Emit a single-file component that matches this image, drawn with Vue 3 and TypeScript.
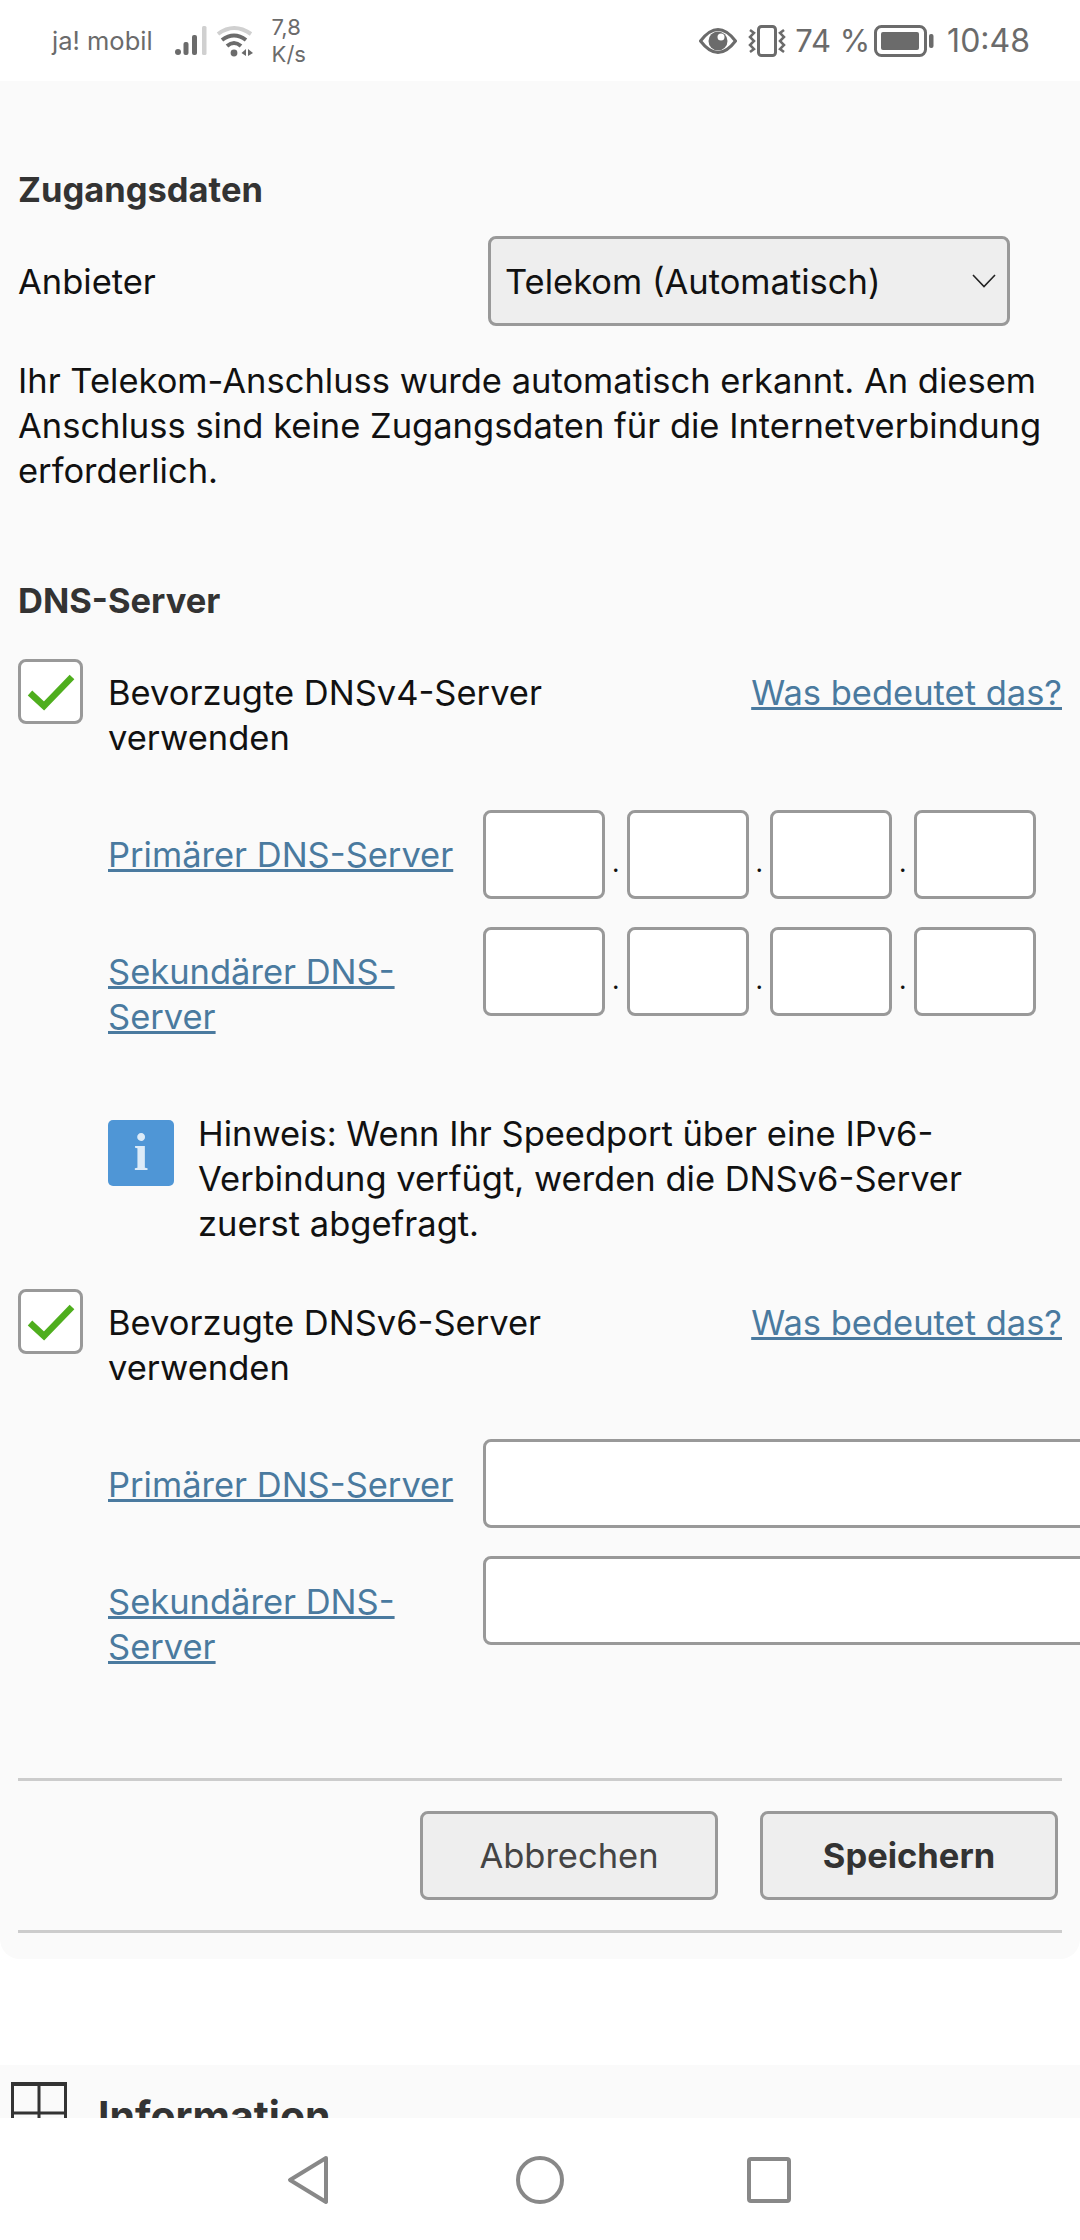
<template>
  <div class="phone">
    <!-- Statusleiste -->
    <header class="status">
      <span class="carrier">ja! mobil</span>
      <svg class="signal" width="32" height="31" viewBox="0 0 32 31">
        <circle cx="3" cy="27" r="3" fill="#6b6b6b" />
        <rect x="8.5" y="17" width="5" height="13" rx="2" fill="#6b6b6b" />
        <rect x="17" y="10" width="5" height="20" rx="2" fill="#6b6b6b" />
        <rect x="27" y="1" width="4.5" height="29" rx="1.5" fill="#d0d0d0" />
      </svg>
      <svg class="wifi" width="38" height="32" viewBox="0 0 38 32">
        <path d="M2 9 Q18 -3 35 9" fill="none" stroke="#d0d0d0" stroke-width="4" />
        <path d="M6 15 Q18 6 30 15" fill="none" stroke="#6b6b6b" stroke-width="4" />
        <path d="M11 21 Q18 15 25 21" fill="none" stroke="#6b6b6b" stroke-width="4" />
        <circle cx="18" cy="28" r="3.4" fill="#6b6b6b" />
        <path d="M30 24 L25.5 28 L30 31 Z M32 24 L37 28 L32 31 Z" fill="#6b6b6b" />
      </svg>
      <span class="speed">7,8<br />K/s</span>
      <span class="grow"></span>
      <svg class="eye" width="38" height="26" viewBox="0 0 38 26">
        <path d="M1.5 13 Q19 -10 36.500 13 Q19 36 1.500 13 Z" fill="none" stroke="#6b6b6b" stroke-width="3" />
        <circle cx="19" cy="13" r="9.500" fill="#6b6b6b" />
        <circle cx="22" cy="9" r="3.500" fill="#fff" />
      </svg>
      <svg class="vibrate" width="38" height="32" viewBox="0 0 38 32">
        <rect x="10.500" y="1.500" width="17" height="29" rx="3" fill="none" stroke="#6b6b6b" stroke-width="3" />
        <path d="M2 5 L6 8 L2 12 L6 16 L2 20 L6 24 L2 27" fill="none" stroke="#6b6b6b" stroke-width="2.500" />
        <path d="M36 5 L32 8 L36 12 L32 16 L36 20 L32 24 L36 27" fill="none" stroke="#6b6b6b" stroke-width="2.500" />
      </svg>
      <span class="pct">74 %</span>
      <svg class="battery" width="60" height="32" viewBox="0 0 60 32">
        <rect x="1.500" y="1.500" width="50" height="29" rx="6" fill="none" stroke="#6b6b6b" stroke-width="3" />
        <rect x="7" y="7" width="38" height="18" rx="2" fill="#6b6b6b" />
        <rect x="55" y="9" width="4.500" height="14" rx="2" fill="#6b6b6b" />
      </svg>
      <span class="clock">10:48</span>
    </header>

    <main class="card">
      <h2 class="heading">Zugangsdaten</h2>
      <div class="provider">
        <span class="provider-label">Anbieter</span>
        <div class="select">
          <span>Telekom (Automatisch)</span>
          <svg width="24" height="14" viewBox="0 0 24 14">
            <path d="M1 1 L12 12.500 L23 1" fill="none" stroke="#222" stroke-width="1.600" />
          </svg>
        </div>
      </div>
      <p class="intro">
        Ihr Telekom-Anschluss wurde automatisch erkannt. An diesem Anschluss sind keine Zugangsdaten für die
        Internetverbindung erforderlich.
      </p>

      <h2 class="heading dns-heading">DNS-Server</h2>

      <div class="check-row">
        <span class="checkbox">
          <svg width="50" height="38" viewBox="0 0 50 38">
            <path d="M4 20 L18 33 L46 4" fill="none" stroke="#4fae1e" stroke-width="6.500" />
          </svg>
        </span>
        <span class="check-text">Bevorzugte DNSv4-Server verwenden</span>
        <a class="link help">Was bedeutet das?</a>
      </div>
      <div class="field first">
        <a class="link field-label">Primärer DNS-Server</a>
        <div class="ip">
          <template v-for="n in 4" :key="n">
            <input class="box" type="text" />
            <span v-if="n < 4" class="dot">.</span>
          </template>
        </div>
      </div>
      <div class="field">
        <a class="link field-label">Sekundärer DNS-Server</a>
        <div class="ip">
          <template v-for="n in 4" :key="n">
            <input class="box" type="text" />
            <span v-if="n < 4" class="dot">.</span>
          </template>
        </div>
      </div>

      <div class="note">
        <span class="note-icon">i</span>
        <p class="note-text">
          Hinweis: Wenn Ihr Speedport über eine IPv6-Verbindung verfügt, werden die DNSv6-Server zuerst abgefragt.
        </p>
      </div>

      <div class="check-row v6">
        <span class="checkbox">
          <svg width="50" height="38" viewBox="0 0 50 38">
            <path d="M4 20 L18 33 L46 4" fill="none" stroke="#4fae1e" stroke-width="6.500" />
          </svg>
        </span>
        <span class="check-text">Bevorzugte DNSv6-Server verwenden</span>
        <a class="link help">Was bedeutet das?</a>
      </div>
      <div class="field first lower">
        <a class="link field-label">Primärer DNS-Server</a>
        <input class="box wide" type="text" />
      </div>
      <div class="field lower">
        <a class="link field-label">Sekundärer DNS-Server</a>
        <input class="box wide" type="text" />
      </div>

      <div class="actions">
        <button class="btn" type="button">Abbrechen</button>
        <button class="btn primary" type="button">Speichern</button>
      </div>
    </main>

    <section class="info">
      <svg class="info-icon" width="56" height="60" viewBox="0 0 56 60">
        <path d="M1.500 2 H54.500 V60 M1.500 2 V60 M28 2 V60 M1.500 31 H54.500" fill="none" stroke="#333" stroke-width="3" />
        <rect x="0" y="0" width="56" height="4" fill="#333" />
      </svg>
      <span class="info-title">Information</span>
    </section>

    <!-- Navigationsleiste -->
    <nav class="nav">
      <svg class="nav-back" width="42" height="50" viewBox="0 0 42 50">
        <path d="M39 3 L3 25 L39 47 Z" fill="none" stroke="#888" stroke-width="4" stroke-linejoin="round" />
      </svg>
      <svg class="nav-home" width="48" height="50" viewBox="0 0 48 50">
        <circle cx="24" cy="25" r="22" fill="none" stroke="#888" stroke-width="4" />
      </svg>
      <svg class="nav-recent" width="44" height="46" viewBox="0 0 44 46">
        <rect x="2" y="2" width="40" height="42" rx="2" fill="none" stroke="#888" stroke-width="4" />
      </svg>
    </nav>
  </div>
</template>

<script setup lang="ts">
</script>

<style>
html,
body {
  margin: 0;
  background: #fff;
}
</style>

<style scoped>
.phone {
  width: 1080px;
  height: 2240px;
  overflow: hidden;
  display: flex;
  flex-direction: column;
  background: #fff;
  font-family: Inter, "Noto Sans", "Liberation Sans", sans-serif;
  font-size: 34.5px;
  line-height: 45px;
  color: #111;
}

.status {
  height: 81px;
  flex: none;
  display: flex;
  align-items: center;
  padding: 0 50px 0 52px;
  box-sizing: border-box;
  color: #6b6b6b;
  background: #fff;
}

.carrier {
  font-size: 25.5px;
}

.signal {
  margin-left: 22px;
}

.wifi {
  margin-left: 9px;
}

.speed {
  margin-left: 18px;
  font-size: 22px;
  line-height: 27px;
}

.grow {
  flex: 1;
}

.vibrate {
  margin-left: 11px;
}

.pct {
  margin-left: 9px;
  font-size: 31px;
}

.battery {
  margin-left: 4px;
}

.clock {
  margin-left: 13px;
  font-size: 32px;
}

.card {
  flex: none;
  box-sizing: border-box;
  padding: 86px 18px 26px;
  background: #fafafa;
  border-radius: 0 0 20px 20px;
}

.heading {
  margin: 0;
  font-size: 34.5px;
  line-height: 45px;
  font-weight: 700;
  color: #333;
}

.provider {
  margin-top: 24px;
  display: flex;
  align-items: center;
}

.provider-label {
  width: 470px;
}

.select {
  width: 522px;
  height: 90px;
  box-sizing: border-box;
  display: flex;
  align-items: center;
  justify-content: space-between;
  padding: 0 11px 0 14px;
  background: #eee;
  border: 3px solid #999;
  border-radius: 8px;
}

.intro {
  margin: 32px 0 0;
}

.dns-heading {
  margin-top: 85px;
}

.check-row {
  margin-top: 36px;
  display: flex;
  align-items: flex-start;
}

.check-row.v6 {
  margin-top: 43px;
}

.checkbox {
  flex: none;
  width: 65px;
  height: 65px;
  box-sizing: border-box;
  display: flex;
  align-items: center;
  justify-content: center;
  background: #fff;
  border: 3px solid #999;
  border-radius: 8px;
}

.check-text {
  width: 480px;
  margin: 11px 0 0 25px;
}

.help {
  margin: 11px 0 0 auto;
}

.link {
  color: #4a7a9f;
  text-decoration: underline;
}

.field {
  margin-top: 28px;
  padding-left: 90px;
  display: flex;
  align-items: flex-start;
}

.field.first {
  margin-top: 50px;
}

.field.first.lower {
  margin-top: 49px;
}

.field-label {
  flex: none;
  width: 375px;
  box-sizing: border-box;
  padding: 22px 20px 0 0;
}

.lower .field-label {
  padding-top: 23px;
}

.ip {
  display: flex;
}

.box {
  flex: none;
  width: 122px;
  height: 89px;
  box-sizing: border-box;
  padding: 0;
  background: #fff;
  border: 3px solid #999;
  border-radius: 8px;
}

.box.wide {
  width: 700px;
}

.dot {
  width: 21.5px;
  text-align: center;
  padding-top: 30px;
  font-size: 26px;
}

.note {
  margin-top: 72px;
  padding-left: 90px;
  display: flex;
  align-items: flex-start;
}

.note-icon {
  flex: none;
  width: 66px;
  height: 66px;
  margin-top: 9px;
  border-radius: 5px;
  background: #4f96d6;
  color: #dcebf8;
  font-family: "Liberation Serif", serif;
  font-weight: 700;
  font-size: 52px;
  line-height: 66px;
  text-align: center;
}

.note-text {
  margin: 0 0 0 24px;
}

.actions {
  margin-top: 109px;
  padding: 30px 4px 30px 0;
  border-top: 3px solid #ccc;
  border-bottom: 3px solid #ccc;
  display: flex;
  justify-content: flex-end;
  gap: 42px;
}

.btn {
  width: 298px;
  height: 89px;
  padding: 0;
  background: #eee;
  border: 3px solid #999;
  border-radius: 8px;
  font: inherit;
  color: #444;
}

.btn.primary {
  font-weight: 700;
  color: #333;
}

.info {
  margin-top: 106px;
  flex: none;
  height: 53px;
  overflow: hidden;
  background: #fafafa;
  display: flex;
  align-items: flex-start;
  padding-left: 11px;
}

.info-icon {
  margin-top: 17px;
}

.info-title {
  margin: 29px 0 0 31px;
  font-size: 41px;
  font-weight: 700;
  color: #333;
}

.nav {
  flex: none;
  height: 122px;
  box-sizing: border-box;
  padding: 37px 0 0 287px;
  background: #fff;
  display: flex;
  align-items: flex-start;
}

.nav-home {
  margin-left: 187px;
}

.nav-recent {
  margin: 2px 0 0 183px;
}
</style>
